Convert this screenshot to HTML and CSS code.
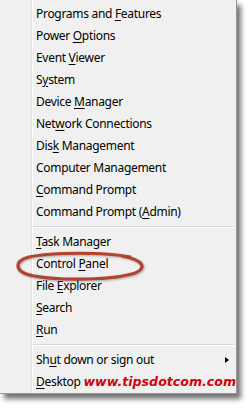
FILE: index.html
```html
<!DOCTYPE html>
<html>
<head>
<meta charset="utf-8">
<link rel="stylesheet" href="styles.css">
</head>
<body>
<div class="stage">
  <div class="menu">
    <div class="item">Programs and <u>F</u>eatures</div>
    <div class="item">Power <u>O</u>ptions</div>
    <div class="item">Event <u>V</u>iewer</div>
    <div class="item">S<u>y</u>stem</div>
    <div class="item">Device <u>M</u>anager</div>
    <div class="item">Net<u>w</u>ork Connections</div>
    <div class="item">Dis<u>k</u> Management</div>
    <div class="item">Computer Management</div>
    <div class="item"><u>C</u>ommand Prompt</div>
    <div class="item">Command Prompt (<u>A</u>dmin)</div>
    <div class="sep"></div>
    <div class="item"><u>T</u>ask Manager</div>
    <div class="item">Control <u>P</u>anel</div>
    <div class="item">File <u>E</u>xplorer</div>
    <div class="item"><u>S</u>earch</div>
    <div class="item"><u>R</u>un</div>
    <div class="sep"></div>
    <div class="item sub">Sh<u>u</u>t down or sign out<span class="arrow"></span></div>
    <div class="item"><u>D</u>esktop <span class="mark">www.tipsdotcom.com</span></div>
  </div>
  <svg class="circle" width="136" height="32" viewBox="0 0 136 32">
    <path d="M118 6 C 94 1, 40 1, 17 6 C 2 10, 1 21, 22 25 C 50 30, 102 29, 123 22 C 135 17, 132 9, 110 5" fill="none" stroke="#b4432e" stroke-width="3.2" stroke-linecap="round"/>
  </svg>
</div>
</body>
</html>
```

FILE: styles.css
```css
html, body {
  margin: 0;
  padding: 0;
  background: #ffffff;
}
.stage {
  position: relative;
  width: 252px;
  height: 409px;
  overflow: hidden;
}
.menu {
  width: 237px;
  height: 394px;
  box-sizing: border-box;
  padding-top: 3px;
  background: #f0f0f0 linear-gradient(to right, transparent 31px, #e2e3e3 31px, #e2e3e3 32px, #ffffff 32px, #ffffff 33px, transparent 33px);
  border-right: 1px solid #979797;
  border-bottom: 1px solid #979797;
  box-shadow: 4px 5px 5px rgba(0, 0, 0, 0.55);
  font-family: "Segoe UI", "Noto Sans", sans-serif;
  font-size: 12px;
  letter-spacing: -0.3px;
  color: #000;
}
.item {
  height: 22px;
  line-height: 22px;
  padding-left: 36px;
  white-space: nowrap;
  position: relative;
}
.item u {
  text-decoration-thickness: 1px;
  text-underline-offset: 2px;
}
.sep {
  height: 8px;
  position: relative;
}
.sep::after {
  content: "";
  position: absolute;
  left: 33px;
  right: 2px;
  top: 3px;
  height: 1px;
  background: #d7d7d7;
  border-bottom: 1px solid #ffffff;
}
.arrow {
  position: absolute;
  left: 225px;
  top: 8px;
  width: 0;
  height: 0;
  border-top: 3.5px solid transparent;
  border-bottom: 3.5px solid transparent;
  border-left: 4px solid #000;
}
.mark {
  font-family: "DejaVu Sans", Verdana, sans-serif;
  font-weight: bold;
  font-style: italic;
  font-size: 12.6px;
  letter-spacing: 0;
  color: #d4000d;
  margin-left: 0;
}
.circle {
  position: absolute;
  left: 12px;
  top: 251px;
  filter: drop-shadow(1px 1px 1px rgba(0, 0, 0, 0.3));
}
```
